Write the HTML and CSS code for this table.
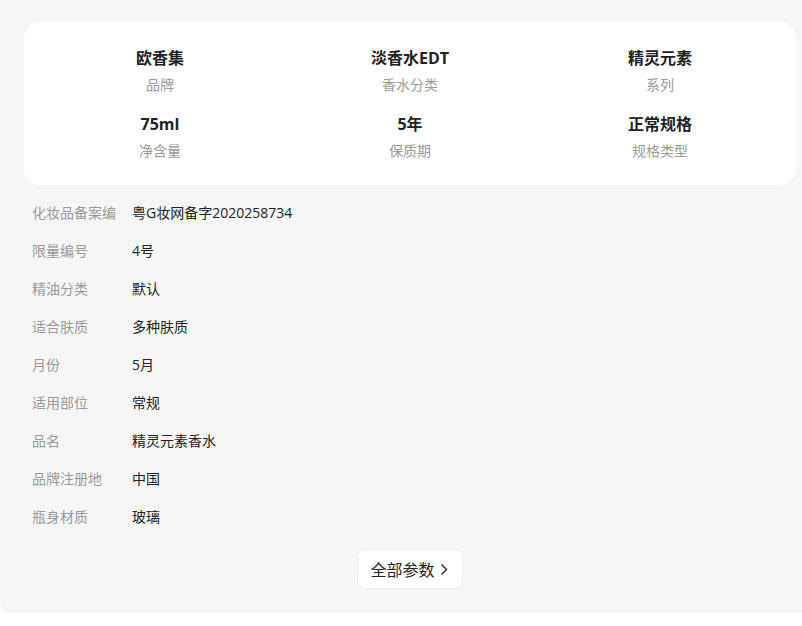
FILE: index.html
```html
<!doctype html>
<html lang="zh-CN">
    <head>
        <meta charset="UTF-8" />
        <meta name="viewport" content="width=device-width, initial-scale=1.0" />
        <title>商品参数</title>
        <link rel="stylesheet" href="styles.css">
    </head>
    <body>
        <div class="params-panel">
            <div class="params-card">
                <div class="param-item">
                    <div class="param-value">欧香集</div>
                    <div class="param-label">品牌</div>
                </div>
                <div class="param-item">
                    <div class="param-value">淡香水EDT</div>
                    <div class="param-label">香水分类</div>
                </div>
                <div class="param-item">
                    <div class="param-value">精灵元素</div>
                    <div class="param-label">系列</div>
                </div>
                <div class="param-item">
                    <div class="param-value">75ml</div>
                    <div class="param-label">净含量</div>
                </div>
                <div class="param-item">
                    <div class="param-value">5年</div>
                    <div class="param-label">保质期</div>
                </div>
                <div class="param-item">
                    <div class="param-value">正常规格</div>
                    <div class="param-label">规格类型</div>
                </div>
            </div>

            <ul class="param-list">
                <li><span class="row-label">化妆品备案编</span><span class="row-value">粤G妆网备字2020258734</span></li>
                <li><span class="row-label">限量编号</span><span class="row-value">4号</span></li>
                <li><span class="row-label">精油分类</span><span class="row-value">默认</span></li>
                <li><span class="row-label">适合肤质</span><span class="row-value">多种肤质</span></li>
                <li><span class="row-label">月份</span><span class="row-value">5月</span></li>
                <li><span class="row-label">适用部位</span><span class="row-value">常规</span></li>
                <li><span class="row-label">品名</span><span class="row-value">精灵元素香水</span></li>
                <li><span class="row-label">品牌注册地</span><span class="row-value">中国</span></li>
                <li><span class="row-label">瓶身材质</span><span class="row-value">玻璃</span></li>
            </ul>

            <div class="more-wrap">
                <button class="more-btn">
                    全部参数
                    <svg width="8" height="13" viewBox="0 0 8 13">
                        <path d="M1.5 1.5 L6.5 6.5 L1.5 11.5" fill="none" stroke="#222" stroke-width="1.4" />
                    </svg>
                </button>
            </div>
        </div>
    </body>
</html>
```

FILE: styles.css
```css
body {
    font-family: "Open Sans", "Noto Sans CJK SC", sans-serif;
    margin: 0;
    padding: 0;
    background-color: #fff;
    overflow: hidden;
}

.params-panel {
    background-color: #f6f6f6;
    padding: 22px 6px 24px 24px;
    border-bottom-left-radius: 10px;
}

.params-card {
    background-color: #fff;
    border-radius: 16px;
    padding: 25px 11px;
    display: grid;
    grid-template-columns: repeat(3, 1fr);
    row-gap: 19px;
    text-align: center;
}

.param-value {
    font-size: 16px;
    line-height: 22px;
    font-weight: 700;
    color: #222;
}

.param-label {
    margin-top: 7px;
    font-size: 14px;
    line-height: 18px;
    color: #999;
}

.param-list {
    list-style: none;
    margin: 8px 0 0;
    padding: 0;
}

.param-list li {
    display: flex;
    align-items: center;
    height: 38px;
    font-size: 14px;
}

.row-label {
    width: 100px;
    padding-left: 8px;
    color: #999;
}

.row-value {
    color: #222;
}

.more-wrap {
    display: flex;
    justify-content: center;
    margin-top: 14px;
}

.more-btn {
    display: flex;
    align-items: center;
    gap: 5px;
    height: 40px;
    padding: 0 14px 0 12px;
    background-color: #fff;
    border: 1px solid #ebebeb;
    border-radius: 8px;
    font-family: inherit;
    font-size: 16px;
    color: #222;
    cursor: pointer;
}
```
